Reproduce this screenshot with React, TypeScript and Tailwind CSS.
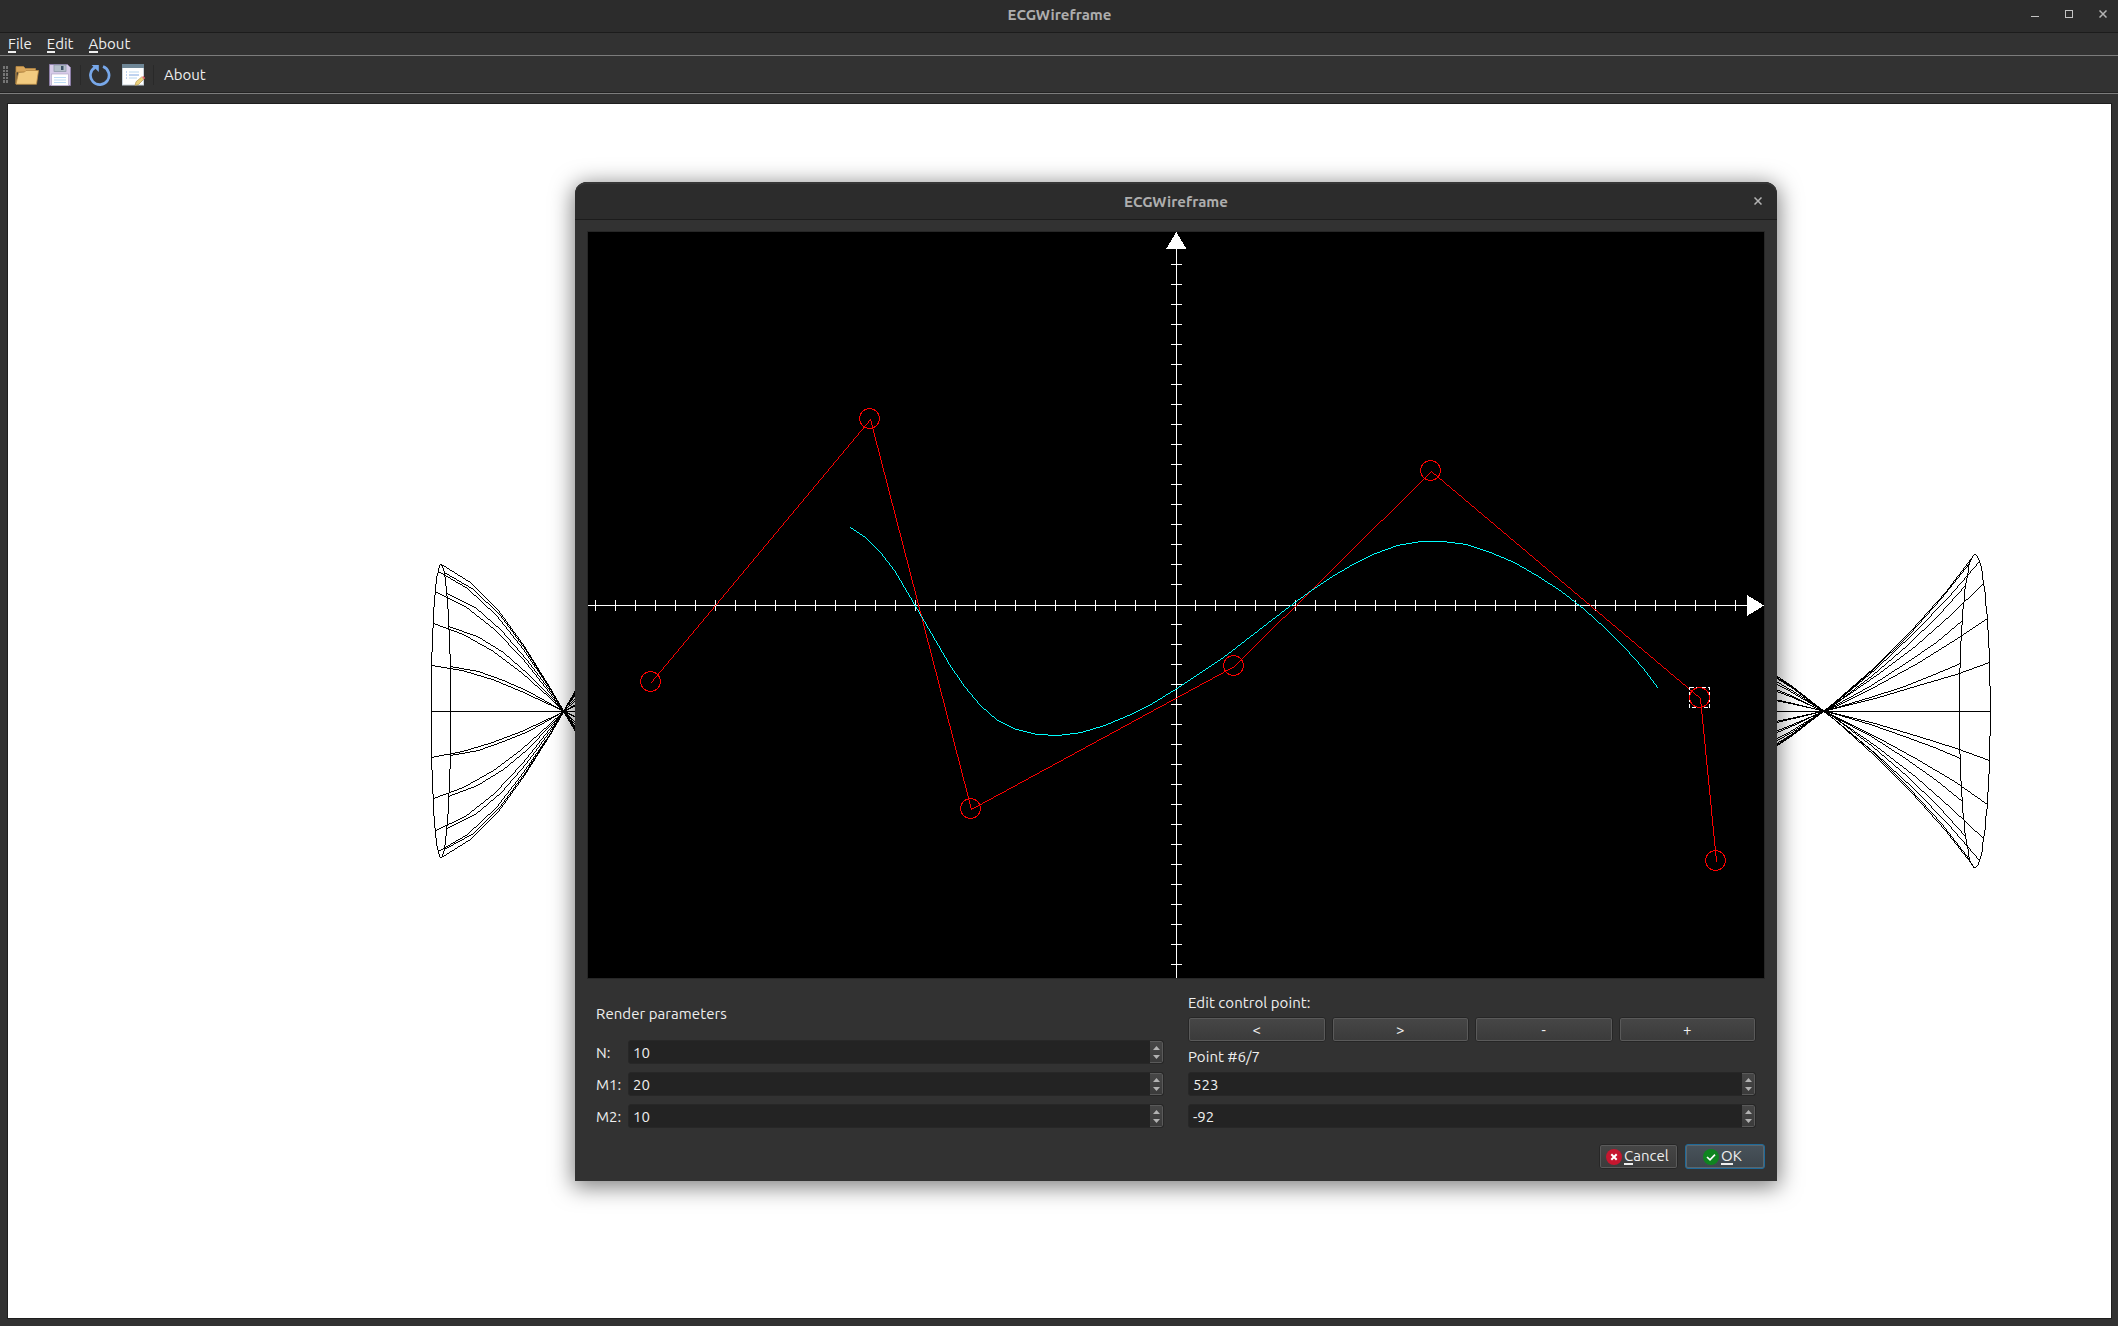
import React from "react";

const FONT = "font-['Ubuntu','Noto_Sans',sans-serif]";

/* ---------- curve geometry ---------- */

type Pt = [number, number];

const CONTROL: Pt[] = [
  [651, 682],
  [870, 419],
  [971, 809],
  [1234, 666],
  [1431, 471],
  [1700, 698],
  [1716, 861],
];

const N = 10;

function spline(points: Pt[], n: number): Pt[] {
  const out: Pt[] = [];
  for (let i = 0; i + 3 < points.length; i++) {
    const [a, b, c, d] = points.slice(i, i + 4);
    for (let k = i === 0 ? 0 : 1; k <= n; k++) {
      const t = k / n;
      const w0 = (1 - t) ** 3 / 6;
      const w1 = (3 * t ** 3 - 6 * t ** 2 + 4) / 6;
      const w2 = (-3 * t ** 3 + 3 * t ** 2 + 3 * t + 1) / 6;
      const w3 = t ** 3 / 6;
      out.push([
        w0 * a[0] + w1 * b[0] + w2 * c[0] + w3 * d[0],
        w0 * a[1] + w1 * b[1] + w2 * c[1] + w3 * d[1],
      ]);
    }
  }
  return out;
}

/* Aliased one-pixel line through the points, as horizontal pixel runs. */
function rasterize(pts: Pt[]): string {
  let d = "";
  const run = (x0: number, x1: number, y: number) => {
    const w = x1 - x0 + 1;
    d += `M${x0} ${y}h${w}v1h${-w}z`;
  };
  for (let i = 0; i + 1 < pts.length; i++) {
    let ax = Math.floor(pts[i][0]);
    let ay = Math.floor(pts[i][1]);
    let bx = Math.floor(pts[i + 1][0]);
    let by = Math.floor(pts[i + 1][1]);
    if (ax > bx) [ax, ay, bx, by] = [bx, by, ax, ay];
    const dx = bx - ax;
    const dy = by - ay;
    if (dx >= Math.abs(dy)) {
      let start = ax;
      let row = ay;
      for (let x = ax; x <= bx; x++) {
        const y = dx === 0 ? ay : Math.round(ay + (dy * (x - ax)) / dx);
        if (y !== row) {
          run(start, x - 1, row);
          start = x;
          row = y;
        }
      }
      run(start, bx, row);
    } else {
      const s = Math.sign(dy);
      for (let k = 0; k <= Math.abs(dy); k++) {
        const x = Math.round(ax + (dx * k) / Math.abs(dy));
        run(x, x, ay + s * k);
      }
    }
  }
  return d;
}

const CURVE = spline(CONTROL, N);

/* ---------- wireframe of the revolved curve ---------- */

const M1 = 20;
const SCALE = 1.899;
const CX = 1059.6;
const CY = 711.2;

function project(x: number, r: number, angle: number): Pt {
  const y = r * Math.sin(angle);
  const z = r * Math.cos(angle);
  const k = SCALE / (1 - 0.000204 * z);
  return [CX + x * k, CY - y * k];
}

function Wireframe() {
  const local = CURVE.map(([x, y]) => [x - 1176, 605 - y] as Pt);
  const lines: Pt[][] = [];
  for (let m = 0; m < M1; m++) {
    const a = (m / M1) * 2 * Math.PI;
    lines.push(local.map(([x, r]) => project(x, r, a)));
  }
  for (let i = 0; i < local.length; i += N) {
    const ring: Pt[] = [];
    for (let s = 0; s <= 100; s++) ring.push(project(local[i][0], local[i][1], (s / 100) * 2 * Math.PI));
    lines.push(ring);
  }
  return (
    <svg viewBox="8 104 2103 1214" className="block h-full w-full" shapeRendering="crispEdges" fill="#000">
      {lines.map((l, i) => (
        <path key={i} d={rasterize(l)} />
      ))}
    </svg>
  );
}

/* ---------- control point plot ---------- */

function Plot() {
  const xt: number[] = [];
  for (let x = 595; x <= 1735; x += 20) if (x !== 1175) xt.push(x);
  const yt: number[] = [];
  for (let y = 264; y < 978; y += 20) if (y !== 604) yt.push(y);
  return (
    <svg viewBox="588 232 1176 746" className="block h-full w-full" shapeRendering="crispEdges" fill="none">
      <g fill="#fff">
        <rect x="588" y="605" width="1160" height="1" />
        <rect x="1176" y="248" width="1" height="730" />
        {xt.map((x) => (
          <rect key={x} x={x} y="600" width="1" height="11" />
        ))}
        {yt.map((y) => (
          <rect key={y} x="1171" y={y} width="11" height="1" />
        ))}
        <path d="M1176.3 232 L1186.4 249 H1166 Z" />
        <path d="M1764 605.5 L1747 595 V616 Z" />
      </g>
      <path d={rasterize(CONTROL)} fill="#f00" />
      <rect x="1689.5" y="687.5" width="20" height="20" stroke="#fff" strokeDasharray="4 2" />
      {CONTROL.map(([x, y], i) => (
        <circle key={i} cx={x - 0.5} cy={y - 0.5} r="10" stroke="#f00" />
      ))}
      <path d={rasterize(CURVE)} fill="#0ff" />
    </svg>
  );
}

/* ---------- icons ---------- */

const FolderIcon = () => (
  <svg width="24" height="20" viewBox="0 0 24 20" className="block">
    <path d="M1 19 V1.5 H8.5 L10.5 3.5 H20.5 V7 H1 Z" fill="#d9a75c" stroke="#b98a45" strokeWidth=".8" />
    <path d="M1 19.3 L3.5 7.5 L9.5 7 L11 5.5 H23.5 L21.5 19.3 Z" fill="#f2cb80" stroke="#b98a45" strokeWidth=".8" />
  </svg>
);

const SaveIcon = () => (
  <svg width="22" height="22" viewBox="0 0 22 22" className="block">
    <path d="M.5 .5 H18.5 L21.5 3.5 V21.5 H.5 Z" fill="#d6cbe8" stroke="#8d7fa8" />
    <rect x="5" y="1" width="12" height="6.5" fill="#b4bfca" stroke="#8794a2" strokeWidth=".7" />
    <rect x="12" y="2" width="2.5" height="4" fill="#3f5368" />
    <rect x="2.5" y="10" width="17" height="11.5" fill="#fff" stroke="#b3a8c8" strokeWidth=".7" />
    <path d="M5 13.5 H17 M5 16 H17 M5 18.5 H17" stroke="#bcdcf5" />
  </svg>
);

const ReloadIcon = () => (
  <svg width="22" height="22" viewBox="0 0 22 22" className="block" fill="none">
    <path d="M14 2.6 A9.3 9.3 0 1 1 6.2 3.2" stroke="#78a8ea" strokeWidth="2.7" />
    <path d="M2.6 1 H9.8 V8 Z" fill="#78a8ea" />
  </svg>
);

const EditIcon = () => (
  <svg width="24" height="22" viewBox="0 0 24 22" className="block">
    <rect x=".5" y=".5" width="21" height="20.5" fill="#fff" stroke="#c8d2da" />
    <rect x="0" y="0" width="22" height="4" fill="#6f8797" />
    <path d="M7 8 H17 M7 14 H15" stroke="#b9d6ee" />
    <path d="M7 11 H17 M4 8 H5 M4 11 H5 M4 14 H5" stroke="#7fa6e0" />
    <path d="M13 21.5 L14 17.8 L19.6 13 L21.8 15.2 L16.5 20.5 Z" fill="#ecd27c" stroke="#a88c4a" strokeWidth=".6" />
    <path d="M20 13 L21.3 12 L23.2 14 L22 15.2 Z" fill="#e0646a" />
  </svg>
);

const CloseGlyph = ({ className }: { className: string }) => (
  <svg viewBox="0 0 8 8" className={className} fill="none" stroke="#b4b4b4" strokeWidth="1.5">
    <path d="M.5 .5 L7.5 7.5 M7.5 .5 L.5 7.5" />
  </svg>
);

/* ---------- widgets ---------- */

function SpinBox({ value }: { value: string }) {
  return (
    <div className="flex h-6 flex-1 overflow-hidden rounded-[3px] border border-[#272727] bg-[#232323]">
      <span className="flex-1 pl-1 leading-[24px]">{value}</span>
      <div className="flex w-[13px] flex-col items-center justify-center gap-[5px] rounded-r-[2px] border-y border-r border-[#5a5a5a] bg-gradient-to-b from-[#464646] to-[#3b3b3b]">
        <svg width="7" height="4" viewBox="0 0 7 4" className="block" fill="#b2b2b2">
          <path d="M0 4 L3.5 0 L7 4 Z" />
        </svg>
        <svg width="7" height="4" viewBox="0 0 7 4" className="block" fill="#b2b2b2">
          <path d="M0 0 L3.5 4 L7 0 Z" />
        </svg>
      </div>
    </div>
  );
}

const Field = ({ label, value }: { label: string; value: string }) => (
  <div className="flex h-6 items-center">
    <span className="w-8 pt-px leading-[23px]">{label}</span>
    <SpinBox value={value} />
  </div>
);

const FlatButton = ({ children }: { children: React.ReactNode }) => (
  <button className="h-[25px] rounded-[3px] border border-[#262626] bg-[#5a5a5a] p-px">
    <span className="flex h-full items-center justify-center rounded-[1px] bg-gradient-to-b from-[#464646] to-[#3b3b3b] pt-[2px]">
      {children}
    </span>
  </button>
);

const Mnemonic = ({ text }: { text: string }) => (
  <span>
    <span className="inline-block h-[18px] border-b-2 border-[#efefef] leading-[18px]">{text[0]}</span>
    {text.slice(1)}
  </span>
);

function Dialog() {
  return (
    <div className="absolute left-[575px] top-[182px] flex h-[999px] w-[1202px] flex-col rounded-t-[12px] bg-[#323232] shadow-[0_4px_22px_2px_rgba(0,0,0,0.5)]">
      <div className="flex h-[38px] items-center rounded-t-[12px] border-b border-[#1c1c1c] bg-[#2c2c2c] pr-[15px] shadow-[inset_0_2px_0_#363636]">
        <span className="flex-1 pl-[23px] pt-[3px] text-center font-bold text-[#aeaeae]">ECGWireframe</span>
        <CloseGlyph className="h-2 w-2" />
      </div>
      <div className="mx-3 mt-[11px] h-[748px] border border-[#272727] bg-black">
        <Plot />
      </div>
      <div className="flex gap-6 pl-[21px]">
        <div className="w-[568px] pt-[25px]">
          <div className="mb-4 leading-5 tracking-[0.06px]">Render parameters</div>
          <div className="flex flex-col gap-2">
            <Field label="N:" value="10" />
            <Field label="M1:" value="20" />
            <Field label="M2:" value="10" />
          </div>
        </div>
        <div className="w-[568px] pt-[14px]">
          <div className="mb-1 leading-5 tracking-[0.06px]">Edit control point:</div>
          <div className="grid grid-cols-4 gap-[6px]">
            <FlatButton>&lt;</FlatButton>
            <FlatButton>&gt;</FlatButton>
            <FlatButton>-</FlatButton>
            <FlatButton>+</FlatButton>
          </div>
          <div className="my-[5px] leading-5 tracking-[0.06px]">Point #6/7</div>
          <div className="flex flex-col gap-2">
            <div className="flex"><SpinBox value="523" /></div>
            <div className="flex"><SpinBox value="-92" /></div>
          </div>
        </div>
      </div>
      <div className="mt-4 flex justify-end gap-[7px] pr-3">
        <button className="h-[25px] w-[79px] rounded-[3px] border border-[#262626] bg-[#5a5a5a] p-px">
          <span className="flex h-full items-center gap-[2px] rounded-[1px] bg-gradient-to-b from-[#464646] to-[#3b3b3b] pl-[5px]">
            <svg width="16" height="16" viewBox="0 0 16 16">
              <circle cx="8" cy="8" r="8" fill="#c6162f" />
              <path d="M5.3 5.3 L10.7 10.7 M10.7 5.3 L5.3 10.7" stroke="#fff" strokeWidth="2" />
            </svg>
            <Mnemonic text="Cancel" />
          </span>
        </button>
        <button className="h-[25px] w-[80px] rounded-[3px] border border-[#1f6a99] bg-[#5b666d] p-px">
          <span className="flex h-full items-center gap-[2px] rounded-[1px] bg-gradient-to-b from-[#48525a] to-[#3d464c] pl-4">
            <svg width="16" height="16" viewBox="0 0 16 16" fill="none">
              <circle cx="8" cy="8" r="8" fill="#0f8420" />
              <path d="M4 8 L7 10.8 L12 5.6" stroke="#fff" strokeWidth="1.6" />
            </svg>
            <Mnemonic text="OK" />
          </span>
        </button>
      </div>
    </div>
  );
}

export default function App() {
  return (
    <div className={`${FONT} relative flex h-[1326px] w-[2118px] flex-col bg-[#323232] text-[15px] text-[#efefef]`}>
      <header className="flex h-[33px] items-center border-b border-[#1c1c1c] bg-[#2c2c2c] pb-1 pr-[11px]">
        <span className="flex-1 pl-[88px] pt-[2px] text-center font-bold text-[#aeaeae]">ECGWireframe</span>
        <div className="flex items-center gap-[26px]">
          <span className="mt-[5px] h-px w-2 bg-[#c4c4c4]" />
          <span className="h-2 w-2 border border-[#c4c4c4]" />
          <CloseGlyph className="h-2 w-2" />
        </div>
      </header>
      <nav className="flex h-[23px] items-center gap-[15px] border-b border-[#7c7c7c] pl-2">
        <Mnemonic text="File" />
        <Mnemonic text="Edit" />
        <Mnemonic text="About" />
      </nav>
      <div className="flex h-[38px] items-center border-b border-[#7c7c7c] pl-[3px] shadow-[inset_0_-1px_0_#222]">
        <div className="grid grid-cols-2 gap-px">
          {Array.from({ length: 10 }, (_, i) => (
            <span key={i} className="h-[2.6px] w-[2px] bg-[#757575]" />
          ))}
        </div>
        <div className="ml-[7px]"><FolderIcon /></div>
        <div className="ml-[10px]"><SaveIcon /></div>
        <span className="ml-[9px] h-5 w-px bg-[#292929]" />
        <div className="ml-2"><ReloadIcon /></div>
        <div className="ml-[11px]"><EditIcon /></div>
        <span className="ml-[7px] h-5 w-px bg-[#292929]" />
        <span className="ml-[10px] pt-px">About</span>
      </div>
      <main className="ml-[7px] mt-[9px] h-[1216px] w-[2105px] border border-[#1e1e1e] bg-white">
        <Wireframe />
      </main>
      <Dialog />
    </div>
  );
}
